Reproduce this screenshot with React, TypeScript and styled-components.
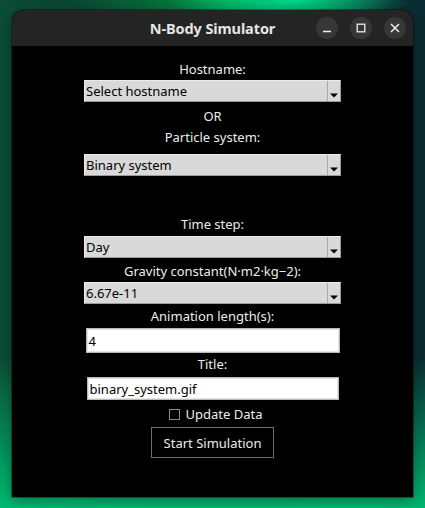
import React from "react";
import styled, { createGlobalStyle } from "styled-components";

const Global = createGlobalStyle`
  html, body { margin: 0; padding: 0; }
  body {
    width: 425px; height: 508px; overflow: hidden;
    font-family: "Noto Sans", "DejaVu Sans", sans-serif;
    background:
      radial-gradient(ellipse 120px 30px at 290px 0px, rgba(0,230,150,0.9), rgba(0,200,120,0) 100%),
      radial-gradient(ellipse 160px 40px at 230px 0px, rgba(0,170,70,0.8), rgba(0,150,60,0) 100%),
      linear-gradient(180deg, rgba(0,0,0,0) 70%, rgba(0,200,120,0.9) 100%),
      linear-gradient(90deg, #0b4d37 0%, #0d3d30 40%, #0c3a34 70%, #0a2b32 100%);
  }
`;

const Desktop = styled.div`
  width: 425px; height: 508px;
  padding: 10px 0 0 12px;
  box-sizing: border-box;
`;

const Window = styled.div`
  width: 401px; height: 487px;
  background: #000;
  border-radius: 12px 12px 0 0;
  overflow: hidden;
  display: flex; flex-direction: column;
  box-shadow: 0 0 0 1px rgba(0,0,0,0.35), 0 4px 14px rgba(0,0,0,0.35);
`;

const TitleBar = styled.div`
  height: 36px; flex: none;
  background: #242424;
  display: grid;
  grid-template-columns: 1fr auto 1fr;
  align-items: center;
`;

const Title = styled.div`
  grid-column: 2;
  color: #e6e6e6;
  font-weight: 700;
  font-size: 14.5px;
  letter-spacing: -0.1px;
`;

const Controls = styled.div`
  grid-column: 3;
  justify-self: end;
  display: flex; gap: 12px;
  padding-right: 7px;
`;

const CtrlBtn = styled.div`
  width: 22px; height: 22px; border-radius: 50%;
  background: #373737;
  display: flex; align-items: center; justify-content: center;
`;

const Content = styled.div`
  display: flex; flex-direction: column; align-items: center;
  padding-top: 14px;
  color: #ececec;
  font-size: 13px;
`;

const Label = styled.div<{ $mt: number }>`
  line-height: 18px;
  height: 18px;
  margin-top: ${p => p.$mt}px;
  white-space: nowrap;
`;

const Combo = styled.div<{ $mt: number }>`
  margin-top: ${p => p.$mt}px;
  width: 257px; height: 22px;
  box-sizing: border-box;
  background: #d9d9d9;
  border-top: 1px solid #ececec;
  border-left: 1px solid #ececec;
  border-right: 1px solid #9a9a9a;
  border-bottom: 1px solid #9a9a9a;
  display: flex;
  color: #000;
`;

const ComboText = styled.div`
  flex: 1;
  line-height: 20px;
  padding-left: 1px;
`;

const ComboArrow = styled.div`
  width: 13px;
  border-left: 1px solid #a8a8a8;
  display: flex; align-items: flex-end; justify-content: center;
  padding-bottom: 3px;
  box-sizing: border-box;
`;

const Entry = styled.div<{ $mt: number; $w: number; $h: number }>`
  margin-top: ${p => p.$mt}px;
  width: ${p => p.$w}px; height: ${p => p.$h}px;
  box-sizing: border-box;
  background: #fff;
  border: 1px solid #b9b9b9;
  box-shadow: inset 0 0 0 1px #e4e4e4;
  color: #000;
  padding-left: 2px;
  display: flex; align-items: center;
`;

const CheckRow = styled.div<{ $mt: number }>`
  margin-top: ${p => p.$mt}px;
  margin-left: 6px;
  display: flex; align-items: center; gap: 6px;
  height: 18px; line-height: 18px;
`;

const CheckBox = styled.div`
  width: 11px; height: 11px;
  box-sizing: border-box;
  border: 1px solid #8a8a8a;
`;

const Button = styled.div<{ $mt: number }>`
  margin-top: ${p => p.$mt}px;
  width: 123px; height: 31px;
  box-sizing: border-box;
  border: 1px solid #6e6e6e;
  display: flex; align-items: center; justify-content: center;
  color: #ececec;
`;

const Arrow = () => (
  <svg width="8" height="5" viewBox="0 0 8 5">
    <path d="M0 0.5 H8 L4 4.5 Z" fill="#000" />
  </svg>
);

const OptionMenu = ({ mt, value }: { mt: number; value: string }) => (
  <Combo $mt={mt}>
    <ComboText>{value}</ComboText>
    <ComboArrow><Arrow /></ComboArrow>
  </Combo>
);

export default function App() {
  return (
    <>
      <Global />
      <Desktop>
        <Window>
          <TitleBar>
            <Title>N-Body Simulator</Title>
            <Controls>
              <CtrlBtn>
                <svg width="10" height="10" viewBox="0 0 10 10">
                  <path d="M1 8.5 H9" stroke="#eee" strokeWidth="1.4" />
                </svg>
              </CtrlBtn>
              <CtrlBtn>
                <svg width="10" height="10" viewBox="0 0 10 10">
                  <rect x="1.2" y="1.2" width="7.6" height="7.6" fill="none" stroke="#eee" strokeWidth="1.3" />
                </svg>
              </CtrlBtn>
              <CtrlBtn>
                <svg width="10" height="10" viewBox="0 0 10 10">
                  <path d="M1 1 L9 9 M9 1 L1 9" stroke="#eee" strokeWidth="1.5" />
                </svg>
              </CtrlBtn>
            </Controls>
          </TitleBar>
          <Content>
            <Label $mt={0}>Hostname:</Label>
            <OptionMenu mt={2} value="Select hostname" />
            <Label $mt={5}>OR</Label>
            <Label $mt={3}>Particle system:</Label>
            <OptionMenu mt={8} value="Binary system" />
            <Label $mt={39}>Time step:</Label>
            <OptionMenu mt={3} value="Day" />
            <Label $mt={4}>Gravity constant(N·m2·kg−2):</Label>
            <OptionMenu mt={2} value="6.67e-11" />
            <Label $mt={3}>Animation length(s):</Label>
            <Entry $mt={3} $w={254} $h={25}>4</Entry>
            <Label $mt={2}>Title:</Label>
            <Entry $mt={4} $w={252} $h={23}>binary_system.gif</Entry>
            <CheckRow $mt={5}>
              <CheckBox />
              <span>Update Data</span>
            </CheckRow>
            <Button $mt={4}>Start Simulation</Button>
          </Content>
        </Window>
      </Desktop>
    </>
  );
}
